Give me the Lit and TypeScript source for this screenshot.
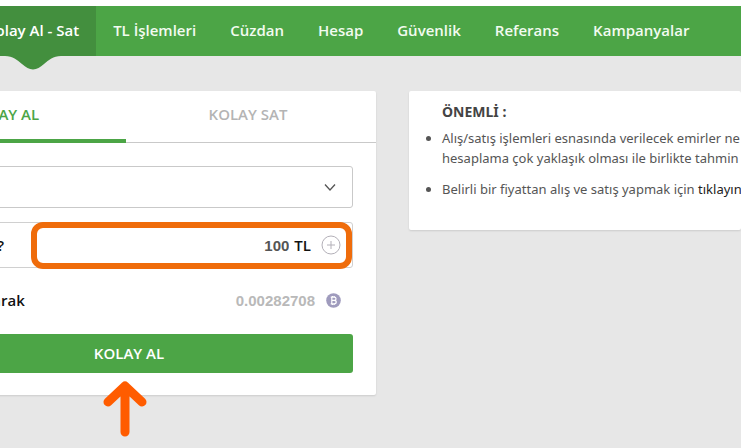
import { LitElement, html, css } from "lit";
import { customElement } from "lit/decorators.js";

const NAV = ["TL İşlemleri", "Cüzdan", "Hesap", "Güvenlik", "Referans", "Kampanyalar"];

@customElement("app-root")
export class AppRoot extends LitElement {
  static styles = css`
    :host {
      display: block;
      box-sizing: border-box;
      min-height: 100vh;
      padding-top: 6px;
      overflow: hidden;
      background: linear-gradient(#fff 6px, #e7e7e7 6px);
      font-family: "Open Sans", "Noto Sans", sans-serif;
      font-size: 15px;
      color: #4a4a4a;
    }
    * { box-sizing: border-box; }
    .nav {
      display: flex;
      height: 50px;
      padding-right: 34px;
      background: #4ca546;
    }
    .current { margin-left: -31px; }
    .nav a {
      position: relative;
      flex: none;
      padding: 0 17px;
      line-height: 48px;
      font-weight: 600;
      color: #f2fbf0;
      text-decoration: none;
    }
    .nav .current { background: #438f3e; color: #fff; }
    .notch {
      position: absolute;
      top: 49px;
      left: 50%;
      width: 56px;
      height: 15px;
      margin-left: -28px;
    }
    .main {
      display: flex;
      align-items: flex-start;
      gap: 33px;
      margin: 35px 0 0 -118px;
    }
    .card, .notes {
      background: #fff;
      border-radius: 2px;
      box-shadow: 0 1px 2px rgba(0, 0, 0, 0.12);
    }
    .card { position: relative; flex: none; width: 494px; }
    .tabs {
      display: flex;
      height: 52px;
      padding-right: 6px;
      border-bottom: 1px solid #c9c9c9;
    }
    .tabs button {
      flex: 1;
      height: 52px;
      padding: 0 0 2px;
      border: 0;
      border-bottom: 4px solid transparent;
      background: none;
      font: 600 15px "Open Sans", sans-serif;
      color: #b4b4b4;
    }
    .tabs .on { color: #4ca546; border-color: #4ca546; }
    .form { padding: 23px 23px 22px; }
    .pick { position: relative; height: 42px; }
    select {
      width: 100%;
      height: 42px;
      padding: 0 12px;
      border: 1px solid #c9c9c9;
      border-radius: 3px;
      background: #fff;
      appearance: none;
      font: 600 15px "Open Sans", sans-serif;
      color: #222;
    }
    .chevron {
      position: absolute;
      right: 17px;
      top: 17px;
      width: 12px;
      height: 9px;
      pointer-events: none;
    }
    .amount {
      position: relative;
      display: flex;
      align-items: center;
      height: 46px;
      margin-top: 14px;
      padding-right: 11px;
      border: 1px solid #d0d0d0;
      border-radius: 3px;
    }
    .amount label {
      flex: none;
      width: 98px;
      text-align: right;
      font-weight: 600;
      color: #111;
    }
    .amount input {
      flex: 1;
      min-width: 0;
      padding: 0;
      border: 0;
      outline: 0;
      background: none;
      text-align: right;
      font: bold 15px "Liberation Sans", Arial, sans-serif;
      color: #555;
    }
    .unit { margin: 0 10px 0 5px; font-weight: 600; color: #111; }
    .plus {
      width: 20px;
      height: 20px;
      padding: 0;
      border: 0;
      background: none;
    }
    svg { display: block; }
    .ring {
      position: absolute;
      inset: -1px 0 -2px 125px;
      border: 6px solid #ef6c0b;
      border-radius: 12px;
      pointer-events: none;
    }
    .result {
      display: flex;
      align-items: center;
      height: 66px;
      padding: 0 12px 2px 11px;
      font-weight: 600;
      color: #111;
    }
    .result output {
      margin: 0 11px 0 auto;
      font: bold 15px "Liberation Sans", Arial, sans-serif;
      color: #b9b9b9;
    }
    .buy {
      display: block;
      width: 100%;
      height: 39px;
      padding: 0 0 2px;
      border: 0;
      border-radius: 3px;
      background: #4ca546;
      font: 600 15px "Open Sans", sans-serif;
      color: #fff;
    }
    .arrow {
      position: absolute;
      left: 50%;
      bottom: -42px;
      width: 44px;
      height: 58px;
      margin-left: -26px;
      pointer-events: none;
    }
    .notes {
      flex: 1;
      min-width: 0;
      padding: 10px 0 31px 33px;
      font-family: "Noto Sans", "Open Sans", sans-serif;
      white-space: nowrap;
    }
    .notes h2 { margin: 0; font-size: 14px; line-height: 22px; font-weight: 700; color: #444; }
    .notes ul { margin: 5px 0 0; padding: 0; font-size: 13px; line-height: 20px; color: #555; }
    .notes li + li { margin-top: 11px; }
    .notes a { color: #222; text-decoration: none; }
  `;

  render() {
    return html`
      <nav class="nav">
        <a class="current" href="#">Kolay Al - Sat
          <svg class="notch" viewBox="0 0 56 15">
            <path fill="#438f3e" d="M0 0H56V1C48 1 44 5 39 9C35 12 32 14.500 28 14.500S21 12 17 9C12 5 8 1 0 1Z" />
          </svg>
        </a>
        ${NAV.map((name) => html`<a href="#">${name}</a>`)}
      </nav>
      <main class="main">
        <section class="card">
          <div class="tabs">
            <button class="on">KOLAY AL</button>
            <button>KOLAY SAT</button>
          </div>
          <div class="form">
            <div class="pick">
              <select aria-label="Para birimi"><option>Bitcoin</option></select>
              <svg class="chevron" viewBox="0 0 12 9" fill="none" stroke="#555" stroke-width="1.3">
                <path d="M1 1.500L6 7L11 1.500" />
              </svg>
            </div>
            <div class="amount">
              <label for="amount">Ne kadar?</label>
              <input id="amount" value="100" />
              <span class="unit">TL</span>
              <button class="plus" aria-label="Artır">
                <svg viewBox="0 0 20 20" fill="none" stroke="#b3b0b8">
                  <circle cx="10" cy="10" r="9" />
                  <path d="M10 6V14M6 10H14" />
                </svg>
              </button>
              <div class="ring"></div>
            </div>
            <div class="result">
              <label for="total">Yaklaşık olarak</label>
              <output id="total">0.00282708</output>
              <svg width="15" height="15" viewBox="0 0 15 15">
                <circle cx="7.500" cy="7.500" r="7.300" fill="#9f9bbd" />
                <path
                  d="M4.700 4.200H8.200C10.600 4.200 10.600 7.300 8.400 7.400C11 7.500 10.800 10.800 8.300 10.800H4.700M5.800 4.200V10.800M5.800 7.400H8.400M6.500 2.900V4.200M8.200 2.900V4.200M6.500 10.800V12.100M8.200 10.800V12.100"
                  fill="none" stroke="#fff" stroke-width="1.200" />
              </svg>
            </div>
            <button class="buy">KOLAY AL</button>
          </div>
          <svg class="arrow" viewBox="0 0 44 58" fill="none" stroke="#ff5c00" stroke-width="9"
            stroke-linecap="round" stroke-linejoin="round">
            <path d="M22 7V53M5 23L22 7L39 23" />
          </svg>
        </section>
        <aside class="notes">
          <h2>ÖNEMLİ :</h2>
          <ul>
            <li>Alış/satış işlemleri esnasında verilecek emirler ne<br />hesaplama çok yaklaşık olması ile birlikte tahmin</li>
            <li>Belirli bir fiyattan alış ve satış yapmak için <a href="#">tıklayın</a></li>
          </ul>
        </aside>
      </main>
    `;
  }
}
